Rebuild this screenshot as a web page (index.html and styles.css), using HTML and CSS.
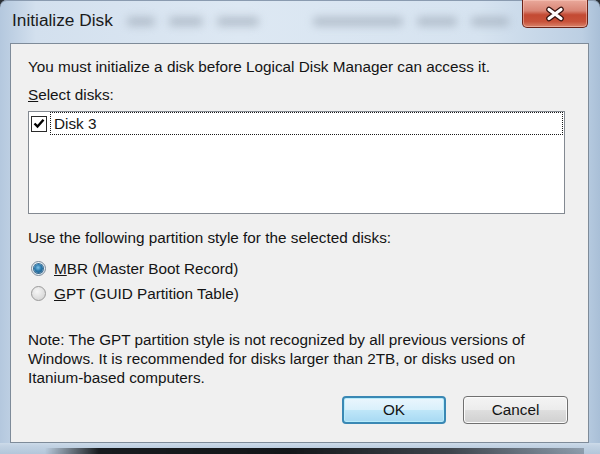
FILE: index.html
```html
<!DOCTYPE html>
<html lang="en">
<head>
<meta charset="utf-8">
<title>Initialize Disk</title>
<link rel="stylesheet" href="styles.css">
</head>
<body>
<div class="window">
  <div class="titlebar">
    <span class="title">Initialize Disk</span>
    <div class="ghost" aria-hidden="true">
      <i class="blob w1"></i><i class="blob w2"></i><i class="blob w3"></i>
      <i class="blob w4 gapl"></i><i class="blob w5"></i><i class="blob w6"></i>
    </div>
    <div class="close">
      <svg width="22" height="16" viewBox="0 0 22 16">
        <path d="M5 3.5 L17 12.5 M17 3.5 L5 12.5" stroke="#3a1410" stroke-width="5.6" stroke-linecap="round"/>
        <path d="M5 3.5 L17 12.5 M17 3.5 L5 12.5" stroke="#ffffff" stroke-width="3.2" stroke-linecap="round"/>
      </svg>
    </div>
  </div>
  <div class="client">
    <p class="line intro">You must initialize a disk before Logical Disk Manager can access it.</p>
    <p class="line select"><u>S</u>elect disks:</p>
    <div class="listbox">
      <div class="item">
        <span class="check">
          <svg width="12" height="11" viewBox="0 0 12 11">
            <path d="M1.5 5.5 L4.5 8.5 L10.5 1.8" fill="none" stroke="#000" stroke-width="2.4"/>
          </svg>
        </span>
        <span class="focus">Disk 3</span>
      </div>
    </div>
    <p class="line use">Use the following partition style for the selected disks:</p>
    <div class="radios">
      <div class="radio-row"><span class="radio on"><span class="dot"></span></span><span><u>M</u>BR (Master Boot Record)</span></div>
      <div class="radio-row"><span class="radio"></span><span><u>G</u>PT (GUID Partition Table)</span></div>
    </div>
    <p class="note">Note: The GPT partition style is not recognized by all previous versions of<br>Windows. It is recommended for disks larger than 2TB, or disks used on<br>Itanium-based computers.</p>
    <div class="buttons">
      <button class="btn default">OK</button>
      <button class="btn cancel">Cancel</button>
    </div>
  </div>
  <div class="bottomframe"><div class="shade"></div></div>
</div>
</body>
</html>
```
FILE: styles.css
```css
* { box-sizing: border-box; }
html, body { margin: 0; padding: 0; }
body {
  width: 600px;
  height: 454px;
  overflow: hidden;
  background: #2b3036;
  font-family: "Liberation Sans", Arial, sans-serif;
}
.window {
  width: 600px;
  height: 454px;
  display: flex;
  flex-direction: column;
  border-radius: 7px 7px 0 0;
  background: linear-gradient(to right, #b4c8de 0%, #d3e0ee 6%, #dde8f3 40%, #d6e3f0 80%, #bccfe3 97%, #a9bfd7 100%);
  overflow: hidden;
  box-shadow: inset 0 1px 0 #8a9bb0;
}
.titlebar {
  height: 43px;
  flex: none;
  display: flex;
  align-items: flex-start;
  padding-left: 12px;
  padding-right: 12px;
}
.title {
  padding-top: 10px;
  line-height: 20px;
  font-size: 17.3px;
  color: #1b1b1b;
  white-space: nowrap;
}
.ghost {
  display: flex;
  align-items: center;
  gap: 14px;
  padding-top: 17px;
  margin-left: 14px;
}
.blob {
  display: block;
  height: 9px;
  border-radius: 4px;
  background: #98a4b2;
  filter: blur(4px);
  opacity: 0.6;
}
.w1 { width: 28px; }
.w2 { width: 34px; }
.w3 { width: 42px; }
.w4 { width: 90px; }
.w5 { width: 40px; }
.w6 { width: 38px; }
.gapl { margin-left: 40px; }
.close {
  margin-left: auto;
  width: 66px;
  height: 28px;
  display: flex;
  align-items: center;
  justify-content: center;
  border: 1px solid #6b2318;
  border-top: none;
  border-radius: 0 0 5px 5px;
  background: linear-gradient(to bottom, #e9a99b 0%, #d98575 40%, #c34a33 55%, #c8523a 80%, #d9846b 100%);
  box-shadow: inset 0 0 0 1px rgba(255, 210, 200, 0.45);
}
.client {
  height: 400px;
  flex: none;
  margin: 0 11px 0 10px;
  border: 1px solid #7e8b99;
  background: #f0f0f0;
  padding: 13px 20px 18px 17px;
  display: flex;
  flex-direction: column;
  font-size: 15.3px;
  color: #141414;
}
.line {
  margin: 0;
  line-height: 19px;
  white-space: nowrap;
}
.select { margin-top: 9px; }
.listbox {
  margin-top: 7px;
  margin-right: 3px;
  height: 103px;
  flex: none;
  border: 1px solid #838991;
  background: #ffffff;
}
.item {
  height: 23px;
  display: flex;
  align-items: center;
}
.check {
  width: 16px;
  height: 16px;
  margin-left: 2px;
  margin-right: 3px;
  border: 1px solid #2a2a2a;
  background: #ffffff;
  display: flex;
  align-items: center;
  justify-content: center;
  flex: none;
}
.focus {
  flex: 1;
  height: 23px;
  line-height: 21px;
  padding-left: 3px;
  margin-right: 1px;
  border: 1px dotted #1a1a1a;
}
.use { margin-top: 14px; }
.radios {
  margin-top: 9px;
  display: flex;
  flex-direction: column;
}
.radio-row {
  height: 25px;
  display: flex;
  align-items: center;
  line-height: 19px;
}
.radio {
  width: 15px;
  height: 15px;
  margin-left: 3px;
  margin-right: 8px;
  border-radius: 50%;
  border: 1px solid #9a9a9a;
  background: radial-gradient(circle at 40% 35%, #f6f6f6 0%, #dedede 60%, #cfcfcf 100%);
  display: flex;
  align-items: center;
  justify-content: center;
  flex: none;
}
.radio.on {
  border-color: #7b8a99;
  background: radial-gradient(circle at 40% 35%, #ffffff 0%, #e6eef4 70%, #cfd9e2 100%);
}
.dot {
  width: 9px;
  height: 9px;
  border-radius: 50%;
  background: radial-gradient(circle at 45% 40%, #7fc3ea 0%, #2a78ab 45%, #1b4f78 100%);
  box-shadow: 0 0 0 1px #3b6e94;
}
.note {
  margin: 24px 0 0 0;
  line-height: 19px;
  white-space: nowrap;
}
.buttons {
  margin-top: auto;
  display: flex;
  justify-content: flex-end;
  gap: 17px;
}
.btn {
  height: 28px;
  font-family: inherit;
  font-size: 15.3px;
  color: #141414;
  border-radius: 4px;
  padding: 0;
  cursor: default;
}
.default {
  width: 104px;
  border: 2px solid #3a88b4;
  background: linear-gradient(to bottom, #eaf6fd 0%, #d9f0fb 48%, #bee6f8 52%, #a7d9f3 100%);
  box-shadow: inset 0 0 0 1px #b8ecfb;
}
.cancel {
  width: 105px;
  border: 1px solid #707070;
  background: linear-gradient(to bottom, #f4f4f4 0%, #ececec 48%, #dedede 52%, #d0d0d0 100%);
  box-shadow: inset 0 0 0 1px #fbfbfb;
}
.bottomframe {
  flex: 1;
  position: relative;
  background: linear-gradient(to bottom, #cddbe9 0, #c2d2e3 3px, #b3c6da 100%);
}
.shade {
  position: absolute;
  left: 45px;
  right: 16px;
  top: 5px;
  height: 6px;
  background: linear-gradient(to right, rgba(10, 12, 14, 0) 0%, rgba(10, 12, 14, 0.92) 10%, rgba(10, 12, 14, 0.95) 45%, rgba(40, 44, 50, 0.85) 75%, rgba(60, 70, 80, 0.35) 100%);
  filter: blur(0.6px);
}
```
